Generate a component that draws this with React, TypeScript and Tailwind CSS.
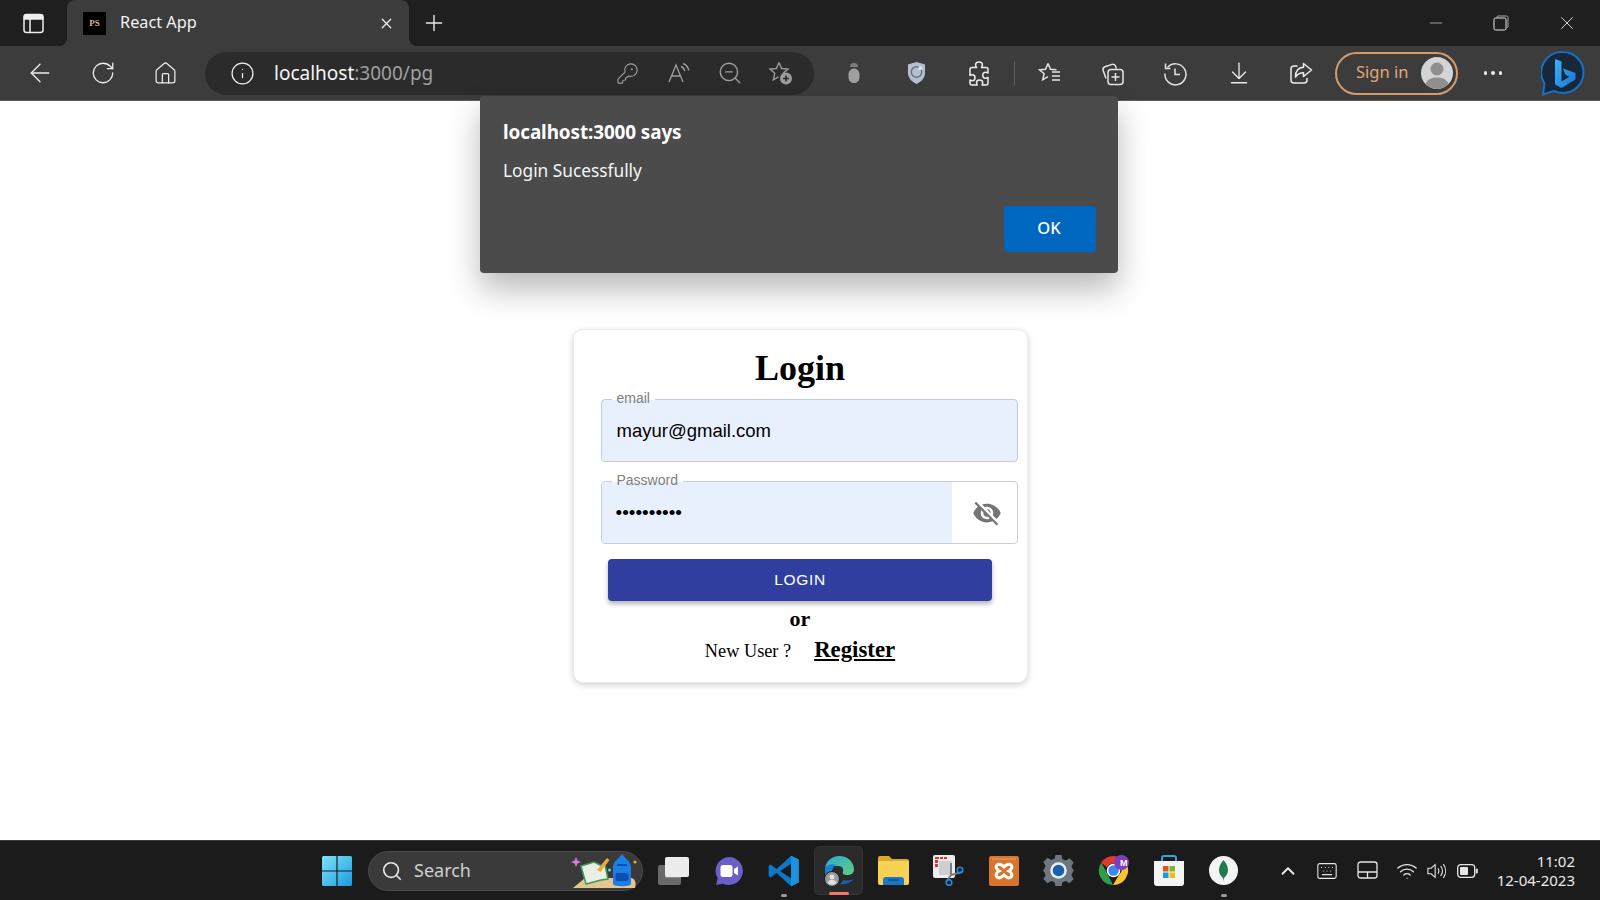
import React from "react";
import {
  ArrowLeft, RotateCw, House, Info, KeyRound, ZoomOut, ArrowDownToLine, Plus, X, Minus,
  Search, ChevronUp, Keyboard, Wifi,
} from "lucide-react";

const ui = { fontFamily: '"Noto Sans", "Open Sans", sans-serif' };
const serif = { fontFamily: '"Liberation Serif", serif' };
const arial = { fontFamily: '"Liberation Sans", Arial, sans-serif' };

function Cell({ w, children }: { w: string; children: React.ReactNode }) {
  return <div className={`${w} h-full flex items-center justify-center shrink-0`}>{children}</div>;
}

function SidebarIcon() {
  return (
    <svg width="21" height="21" viewBox="0 0 21 21" fill="none" stroke="#eee" strokeWidth="1.5">
      <rect x="1" y="1.5" width="19" height="18" rx="2.5" />
      <path d="M1.5 3.5 Q1.5 2 3 2H18q1.5 0 1.5 1.5V6H1.5z" fill="#eee" />
      <path d="M7 6v13" />
    </svg>
  );
}

function Favicon() {
  return (
    <div className="w-[23px] h-[23px] bg-black flex items-center justify-center text-[9px] font-bold text-[#d9b98a] leading-none" style={serif}>
      PS
    </div>
  );
}

function ReadAloud() {
  return (
    <svg width="24" height="24" viewBox="0 0 24 24" fill="none" stroke="#9c9c9c" strokeWidth="1.4">
      <path d="M2 21 9 4l7 17M4.6 15h8.8" />
      <path d="M14 5.5c2 .8 3.3 2.4 3.7 4.6M16 2.5c3.2 1.2 5.2 3.7 5.6 7" />
    </svg>
  );
}

function FavAdd() {
  return (
    <svg width="26" height="26" viewBox="0 0 26 26" fill="none" stroke="#9c9c9c" strokeWidth="1.4">
      <path d="M11 2.5l2.6 6 6.4.6-4.8 4.2 1.4 6.3" />
      <path d="M11 2.5 8.4 8.5 2 9.1l4.8 4.2-1.5 6.500 5.200-3" />
      <circle cx="18" cy="18.5" r="6" fill="#9c9c9c" stroke="none" />
      <path d="M18 15.5v6M15 18.5h6" stroke="#2b2b2b" strokeWidth="1.6" />
    </svg>
  );
}

function Figure() {
  return (
    <svg width="14" height="22" viewBox="0 0 14 22">
      <path d="M3 5a4 4 0 0 1 8 0z" fill="#7d7d7d" />
      <path d="M1.5 12c0-3 2.5-5.5 5.5-5.5S12.500 9 12.500 12v3.500a5.500 5.500 0 0 1-11 0z" fill="#a0a0a0" />
    </svg>
  );
}

function Shield() {
  return (
    <svg width="19" height="24" viewBox="0 0 20 25">
      <path d="M10 1 19 3.500V12c0 5.500-3.500 9.500-9 12C4.500 21.500 1 17.500 1 12V3.500z" fill="#b6bfd0" />
      <circle cx="10" cy="11.500" r="5.500" fill="none" stroke="#6a7484" strokeWidth="1.600" />
      <circle cx="14" cy="7.500" r="2" fill="#dfe4ec" />
    </svg>
  );
}

function PuzzleIcon() {
  return (
    <svg width="23" height="25" viewBox="0 0 23 25" fill="none" stroke="#eeeeee" strokeWidth="1.500" strokeLinejoin="round">
      <path d="M3 6.500h4.500c-.6-1-.9-1.700-.9-2.500 0-1.700 1.500-3 3.400-3s3.400 1.300 3.400 3c0 .8-.3 1.500-.9 2.500h4.500q2 0 2 2v3.500c-1-.6-1.800-.8-2.500-.8-1.500 0-2.800 1.300-2.800 3s1.300 3 2.800 3c.7 0 1.500-.2 2.500-.8V22q0 2-2 2h-4c.5-1 .7-1.600.7-2.300 0-1.500-1.400-2.700-3.100-2.700s-3.100 1.200-3.100 2.700c0 .7.200 1.300.7 2.300H3q-2 0-2-2v-3c1 .5 1.500.7 2.200.7 1.600 0 2.800-1.300 2.800-3s-1.200-3-2.800-3c-.7 0-1.200.2-2.200.7V8.500q0-2 2-2z" />
    </svg>
  );
}

function FavList() {
  return (
    <svg width="24" height="24" viewBox="0 0 24 24" fill="none" stroke="#e4e4e4" strokeWidth="1.5">
      <path d="M10 2.500l2.500 5.800 6 .5M10 2.500 7.500 8.300 1.500 8.800l4.600 4-1.400 6 5.300-3.100" />
      <path d="M14 11h8M14 15h8M14 19h8" />
    </svg>
  );
}

function Collections() {
  return (
    <svg width="25" height="25" viewBox="0 0 25 25" fill="none" stroke="#e4e4e4" strokeWidth="1.5">
      <path d="M6 17.500 3.200 9.500c-.7-2 .2-3.200 1.800-3.800l7-2.300c1.600-.5 3 .1 3.600 1.800l.7 2.300" />
      <rect x="8" y="8.500" width="15" height="15" rx="3" />
      <path d="M15.500 12v8M11.500 16h8" />
    </svg>
  );
}

function History() {
  return (
    <svg width="25" height="25" viewBox="0 0 25 25" fill="none" stroke="#e4e4e4" strokeWidth="1.5">
      <path d="M4.500 6.500A10.500 10.500 0 1 1 2 12.500" />
      <path d="M2.500 2.500v5h5" />
      <path d="M12 7.500V13.500h5" />
    </svg>
  );
}

function ShareBox() {
  return (
    <svg width="24" height="24" viewBox="0 0 24 24" fill="none" stroke="#ececec" strokeWidth="1.500" strokeLinejoin="round">
      <path d="M8.500 5H5q-3 0-3 3v11q0 3 3 3h10q3 0 3-3v-2" />
      <path d="M14.500 2.500 22.500 9l-8 6.500v-3.800c-3.500 0-6 1-8 4.300 0-6 3-9.500 8-9.700z" />
    </svg>
  );
}

function Avatar() {
  return (
    <svg width="32" height="32" viewBox="0 0 32 32">
      <circle cx="16" cy="16" r="16" fill="#d4d4d4" />
      <circle cx="16" cy="12" r="6.500" fill="#8f8f8f" />
      <path d="M4.500 27c2-5 6-6.500 11.500-6.500S25.500 22 27.500 27A16 16 0 0 1 4.500 27z" fill="#8f8f8f" />
    </svg>
  );
}

function Bing() {
  return (
    <svg width="44" height="46" viewBox="0 0 44 46">
      <defs>
        <linearGradient id="bingB" x1="0" y1="0" x2="1" y2="1">
          <stop offset="0" stopColor="#38b6f5" />
          <stop offset="1" stopColor="#1f6fd8" />
        </linearGradient>
      </defs>
      <path d="M22 2a20.500 20.500 0 0 1 0 41c-4 0-7-1-9.500-2L2 44.500l1.500-11A20.500 20.500 0 0 1 22 2z" fill="#17283b" stroke="#1a6fc0" strokeWidth="2" />
      <path d="M14 9l6.500 2.500v20l8-4.800-4-1.900-2.500-6.200 12.500 4.500v6.500L20.500 38 14 34.500z" fill="url(#bingB)" />
    </svg>
  );
}

function WinLogo() {
  return (
    <svg width="30" height="30" viewBox="0 0 30 30">
      <defs>
        <linearGradient id="winG" x1="0" y1="0" x2="1" y2="1">
          <stop offset="0" stopColor="#7fe3fa" />
          <stop offset="1" stopColor="#1a9be0" />
        </linearGradient>
      </defs>
      <path d="M0 1.500Q0 0 1.500 0H14.400V14.400H0zM15.600 0H28.500Q30 0 30 1.500V14.400H15.600zM0 15.600H14.400V30H1.500Q0 30 0 28.500zM15.600 15.600H30V28.500Q30 30 28.500 30H15.600z" fill="url(#winG)" />
    </svg>
  );
}

function SearchArt() {
  return (
    <svg width="68" height="36" viewBox="0 0 68 36">
      <path d="M3 35 15 25h46c3 0 6 4 4 10z" fill="#e6c690" />
      <path d="M11 13 24 9l8 4 3-1 3 14-7 1-15 4z" fill="#e9efe2" stroke="#3a9a5a" strokeWidth="1.500" />
      <path d="M27 17 37 5l2.500 2-9 12z" fill="#f0a63a" />
      <path d="M43 31V14c0-5 5-8 9-13 4 5 9 8 9 13v17c0 3-18 3-18 0z" fill="#1c7fe3" />
      <path d="M47 12h10" stroke="#0d4fb0" strokeWidth="2" />
      <rect x="45.500" y="20" width="13" height="8" rx="2" fill="#0d4fb0" />
      <path d="M6 4l1.500 3.500L11 9l-3.500 1.500L6 14l-1.500-3.500L1 9l3.500-1.500z" fill="#d77be0" />
      <circle cx="39.500" cy="17" r="1.500" fill="#66dcd6" />
      <circle cx="65" cy="9" r="1.500" fill="#f4a93a" />
    </svg>
  );
}

function TaskView() {
  return (
    <svg width="32" height="28" viewBox="0 0 32 28">
      <rect x="0" y="8" width="23" height="20" rx="2" fill="#6a6a6a" />
      <rect x="7" y="8" width="16" height="13" fill="#8c8c8c" />
      <rect x="7" y="0" width="24" height="20" rx="2" fill="#ececec" />
    </svg>
  );
}

function Teams() {
  return (
    <svg width="30" height="30" viewBox="0 0 30 30">
      <path d="M15 1a14 14 0 1 1-6 26.700L2 29l1.700-6.600A14 14 0 0 1 15 1z" fill="#6b5fc7" />
      <rect x="6.500" y="9" width="12" height="12" rx="2.500" fill="#fff" />
      <path d="M20 13l4-2.500v9L20 17z" fill="#fff" />
    </svg>
  );
}

function VSCode() {
  return (
    <svg width="32" height="32" viewBox="0 0 100 100">
      <path d="M72 98 96 86V14L72 2 27 44 8 30 2 34v32l6 4 19-14z" fill="#0a7ac7" />
      <path d="M72 27 38 50l34 23z" fill="#1b1b1b" />
      <path d="M72 2 96 14v72L72 98z" fill="#1a94e0" />
    </svg>
  );
}

function Edge() {
  return (
    <svg width="32" height="32" viewBox="0 0 32 32">
      <defs>
        <linearGradient id="edgeA" x1="0" y1="0" x2="1" y2="1">
          <stop offset="0" stopColor="#2fa8dc" />
          <stop offset="1" stopColor="#5fd07a" />
        </linearGradient>
      </defs>
      <path d="M2 13C3 6 9 1 16 1c9 0 15 6 15 14 0 3-3 5-7 5-3 0-5-1-4-3 1-3-1-6-5-6-6 0-11 .5-13 2z" fill="url(#edgeA)" />
      <path d="M2 13c2-3 7-5 11-3-3 2-4.500 5-4.500 9s3 8 8 10C8 30 1 23 2 13z" fill="#1a7fd0" />
      <path d="M17 29c5 1 11-1 13.500-5-2 1-6 2-10 1z" fill="#1a5cb0" />
      <circle cx="9" cy="24" r="7.500" fill="#9a9a9a" stroke="#1a1a1a" />
      <circle cx="9" cy="22" r="2.500" fill="#e2e2e2" />
      <path d="M4.500 28c1-2.500 2.500-3 4.500-3s3.500.5 4.500 3a7 7 0 0 1-9 0z" fill="#e2e2e2" />
    </svg>
  );
}

function Folder() {
  return (
    <svg width="31" height="29" viewBox="0 0 31 29">
      <path d="M0 2q0-2 2-2h9l3 3h15q2 0 2 2v4H0z" fill="#e0a82a" />
      <path d="M0 5h31v22q0 2-2 2H2q-2 0-2-2z" fill="#f8d254" />
      <path d="M5 29v-5q0-3 3-3h15q3 0 3 3v5z" fill="#1b78c8" />
      <path d="M10 24h11" stroke="#0c4f8e" strokeWidth="1.500" />
    </svg>
  );
}

function Snip() {
  return (
    <svg width="31" height="31" viewBox="0 0 31 31">
      <rect x="0" y="0" width="22" height="23" rx="2" fill="#ededed" />
      <path d="M2 2h4v2H2zM7 2h3v2H7zM11 2h3v2h-3zM2 5h3v3H2zM2 9h3v3H2z" fill="#d9362e" />
      <rect x="6" y="6" width="13" height="14" fill="#cfcfcf" />
      <path d="M18 8v12l-5 7M18 20l11-3" stroke="#7c7c7c" strokeWidth="2" fill="none" />
      <circle cx="27" cy="15" r="2.800" fill="none" stroke="#1c8be0" strokeWidth="1.600" />
      <circle cx="16" cy="27.500" r="2.800" fill="none" stroke="#1c8be0" strokeWidth="1.600" />
    </svg>
  );
}

function Xampp() {
  return (
    <svg width="30" height="30" viewBox="0 0 30 30">
      <rect width="30" height="30" rx="2" fill="#d9742c" />
      <path d="M3 3h24" stroke="#e8a270" strokeWidth="1" />
      <path d="M8 9c2-2 5 0 7 2 2-2 5-4 7-2s0 5-2 6c2 1 4 4 2 6s-5 0-7-2c-2 2-5 4-7 2s0-5 2-6C8 14 6 11 8 9z" fill="none" stroke="#fff" strokeWidth="3" />
    </svg>
  );
}

function Gear() {
  return (
    <svg width="31" height="31" viewBox="0 0 31 31">
      <path d="M12.500 0h6l1 4.200 3.300 1.400 3.700-2.300 4.200 4.200-2.300 3.700L29.800 14 31 15.500l-1.200 1.500-1.400 3.300 2.300 3.700-4.200 4.200-3.700-2.300-3.300 1.400-1 4.200h-6l-1-4.200-3.300-1.400-3.700 2.300-4.200-4.200 2.300-3.700L1.200 17 0 15.500 1.200 14l1.400-3.300L.3 7l4.200-4.200 3.700 2.300 3.300-1.400z" fill="#6e7780" />
      <circle cx="15.500" cy="15.500" r="8.300" fill="#e8edf2" />
      <circle cx="15.500" cy="15.500" r="5.800" fill="#1a5fb0" />
    </svg>
  );
}

function Chrome() {
  return (
    <svg width="32" height="32" viewBox="0 0 32 32">
      <path d="M15.500 1a14.500 14.500 0 0 1 12.600 7.300L15.500 8.500A7 7 0 0 0 9 12.500L3.300 7.500A14.500 14.500 0 0 1 15.500 1z" fill="#e0392f" />
      <path d="M3.300 7.500 9.500 19 15 30A14.500 14.500 0 0 1 3.300 7.500z" fill="#2f9e48" />
      <path d="M28.100 8.300A14.500 14.500 0 0 1 15 30L21.500 19a7 7 0 0 0 0-10.700z" fill="#f7c52f" />
      <circle cx="15.500" cy="15.500" r="6.800" fill="#fff" />
      <circle cx="15.500" cy="15.500" r="5.200" fill="#3b87ec" />
      <circle cx="23.500" cy="7.500" r="7.500" fill="#7d3fc0" />
    </svg>
  );
}

function Store() {
  return (
    <svg width="30" height="31" viewBox="0 0 30 31">
      <path d="M8 6V3q0-2 2-2h10q2 0 2 2v3" fill="none" stroke="#2aa7dc" strokeWidth="2" />
      <path d="M0 6h30v22q0 3-3 3H3q-3 0-3-3z" fill="#f4f4f4" />
      <rect x="9" y="11" width="5.500" height="5.500" fill="#e8502a" />
      <rect x="15.500" y="11" width="5.500" height="5.500" fill="#7db52c" />
      <rect x="9" y="17.500" width="5.500" height="5.500" fill="#14a0e0" />
      <rect x="15.500" y="17.500" width="5.500" height="5.500" fill="#f7b91a" />
    </svg>
  );
}

function Mongo() {
  return (
    <svg width="29" height="29" viewBox="0 0 29 29">
      <circle cx="14.500" cy="14.500" r="14.500" fill="#f4f4f4" />
      <path d="M14.500 4c2.500 3 4.500 6 4.500 10 0 4-2.500 6.500-4 8l-.5 3-.5-3c-1.500-1.500-4-4-4-8 0-4 2-7 4.500-10z" fill="#1f7a4d" />
    </svg>
  );
}

function Touchpad() {
  return (
    <svg width="21" height="19" viewBox="0 0 21 19" fill="none" stroke="#e6e6e6" strokeWidth="1.300">
      <rect x="1" y="1" width="19" height="16" rx="2.500" />
      <path d="M1 11h19M10.500 11v6" />
    </svg>
  );
}

function Speaker() {
  return (
    <svg width="22" height="20" viewBox="0 0 22 20" fill="none" stroke="#e6e6e6" strokeWidth="1.200">
      <path d="M1 7v6h3.500L9 17V3L4.500 7z" />
      <path d="M12 7c1.200 1.800 1.200 4.200 0 6M15 4.500c2.400 3.300 2.400 7.700 0 11M18 2.500c3.200 4.500 3.200 10.500 0 15" />
    </svg>
  );
}

function Battery() {
  return (
    <svg width="21" height="14" viewBox="0 0 21 14">
      <rect x=".7" y=".7" width="17" height="12.600" rx="3" fill="none" stroke="#e6e6e6" strokeWidth="1.300" />
      <rect x="3" y="3" width="8" height="8" rx="1" fill="#e6e6e6" />
      <rect x="18.800" y="4.500" width="2" height="5" rx="1" fill="#e6e6e6" />
    </svg>
  );
}

function VisibilityOff() {
  return (
    <svg width="30" height="30" viewBox="0 0 24 24" fill="#757575">
      <path d="M12 7c2.760 0 5 2.240 5 5 0 .65-.13 1.260-.36 1.830l2.920 2.920c1.510-1.260 2.700-2.890 3.430-4.750-1.730-4.390-6-7.500-11-7.500-1.400 0-2.740.25-3.980.7l2.160 2.160C10.740 7.130 11.350 7 12 7zM2 4.270l2.280 2.280.46.46C3.080 8.300 1.780 10.020 1 12c1.730 4.390 6 7.500 11 7.500 1.550 0 3.030-.3 4.380-.84l.42.42L19.730 22 21 20.730 3.270 3 2 4.270zM7.530 9.800l1.550 1.550c-.05.21-.08.43-.08.65 0 1.660 1.340 3 3 3 .22 0 .44-.03.65-.08l1.550 1.550c-.67.33-1.410.53-2.200.53-2.760 0-5-2.240-5-5 0-.79.2-1.530.53-2.200zm4.310-.78l3.150 3.150.02-.16c0-1.660-1.340-3-3-3l-.17.01z" />
    </svg>
  );
}

function Dot() {
  return <span className="absolute bottom-[3px] left-1/2 -translate-x-1/2 w-[6px] h-[3px] rounded-full bg-[#9a9a9a]" />;
}

function TaskItem({ children, dot }: { children: React.ReactNode; dot?: boolean }) {
  return (
    <div className="relative w-[55px] h-full flex items-center justify-center shrink-0">
      {children}
      {dot && <Dot />}
    </div>
  );
}

export default function App() {
  return (
    <div className="w-[1600px] h-[900px] flex flex-col overflow-hidden bg-white" style={ui}>
      {/* tab strip */}
      <div className="h-[46px] shrink-0 flex bg-[#3c3c3c]">
        <div className="w-[67px] shrink-0 bg-[#1f1f1f] rounded-br-[8px] flex items-center justify-center">
          <SidebarIcon />
        </div>
        <div className="w-[342px] shrink-0 bg-[#1f1f1f]">
          <div className="h-full bg-[#3c3c3c] rounded-t-[8px] flex items-center pl-[16px] pr-[14px] text-[#f2f2f2]">
            <Favicon />
            <span className="ml-[14px] text-[16.300px] flex-1 -mt-[2px]">React App</span>
            <X size={17} strokeWidth={1.8} color="#f0f0f0" />
          </div>
        </div>
        <div className="flex-1 bg-[#1f1f1f] rounded-bl-[8px] flex items-center">
          <div className="ml-[12px]">
            <Plus size={26} strokeWidth={1.3} color="#e8e8e8" />
          </div>
          <div className="ml-auto flex items-center h-full">
            <Cell w="w-[65px]"><Minus size={20} strokeWidth={1} color="#b5b5b5" /></Cell>
            <Cell w="w-[65px]">
              <svg width="16" height="16" viewBox="0 0 16 16" fill="none" stroke="#e8e8e8" strokeWidth="1">
                <rect x="1" y="3" width="12" height="12" rx="1.500" />
                <path d="M3.500 3 4.500 1H13.500q1.500 0 1.500 1.500V12L13 13" stroke="#aaa" />
              </svg>
            </Cell>
            <Cell w="w-[67px]"><X size={22} strokeWidth={1} color="#e8e8e8" /></Cell>
          </div>
        </div>
      </div>

      {/* toolbar */}
      <div className="h-[55px] shrink-0 bg-[#3c3c3c] border-b border-[#5a5a5a] flex items-center pl-[8px] relative">
        <Cell w="w-[64px]"><ArrowLeft size={30} strokeWidth={1.1} color="#ececec" /></Cell>
        <Cell w="w-[62px]"><RotateCw size={26} strokeWidth={1.2} color="#ececec" /></Cell>
        <Cell w="w-[63px]"><House size={25} strokeWidth={1.2} color="#ececec" /></Cell>
        <div className="ml-[8px] w-[609px] h-[43px] rounded-full bg-[#2b2b2b] flex items-center pl-[21px] pr-[8px] shrink-0">
          <Cell w="w-[32px]"><Info size={25} strokeWidth={1.2} color="#f0f0f0" /></Cell>
          <span className="ml-[16px] text-[19px] flex-1 text-[#f5f5f5]">
            localhost<span className="text-[#a0a0a0]">:3000/pg</span>
          </span>
          <Cell w="w-[51px]"><KeyRound size={23} strokeWidth={1.2} color="#9c9c9c" /></Cell>
          <Cell w="w-[51px]"><ReadAloud /></Cell>
          <Cell w="w-[51px]"><ZoomOut size={26} strokeWidth={1.3} color="#9c9c9c" /></Cell>
          <Cell w="w-[51px]"><FavAdd /></Cell>
        </div>
        <div className="ml-[8px] flex h-full items-center">
          <Cell w="w-[63px]"><Figure /></Cell>
          <Cell w="w-[63px]"><Shield /></Cell>
          <Cell w="w-[65px]"><PuzzleIcon /></Cell>
        </div>
        <div className="w-px h-[24px] bg-[#5f5f5f] ml-[1px] mr-[3px]" />
        <Cell w="w-[63px]"><FavList /></Cell>
        <Cell w="w-[63px]"><Collections /></Cell>
        <Cell w="w-[63px]"><History /></Cell>
        <Cell w="w-[63px]"><ArrowDownToLine size={26} strokeWidth={1.2} color="#ececec" /></Cell>
        <Cell w="w-[62px]"><ShareBox /></Cell>
        <div className="ml-[3px] w-[123px] h-[43px] shrink-0 rounded-full border-2 border-[#d59a66] flex items-center pl-[19px] pr-[3px] text-[#e3a873] text-[16.500px]">
          <span className="flex-1 -mt-[1px]">Sign in</span>
          <Avatar />
        </div>
        <div className="w-[70px] flex items-center justify-center gap-[4px] shrink-0">
          <span className="w-[3.500px] h-[3.500px] rounded-full bg-[#eee]" />
          <span className="w-[3.500px] h-[3.500px] rounded-full bg-[#eee]" />
          <span className="w-[3.500px] h-[3.500px] rounded-full bg-[#eee]" />
        </div>
        <div className="ml-[13px]"><Bing /></div>
      </div>

      {/* page */}
      <main className="relative flex-1 bg-white flex justify-center pt-[228px]">
        {/* alert dialog */}
        <div className="absolute left-[480px] top-[-5px] w-[638px] h-[177px] bg-[#4b4b4b] rounded-[4px] shadow-[0_16px_32px_rgba(0,0,0,0.28)] flex flex-col text-white z-10 px-[23px]">
          <div className="mt-[22px] text-[18.900px] font-bold leading-[28px] -tracking-[0.1px]">localhost:3000 says</div>
          <div className="mt-[11px] text-[17.300px] leading-[28px] text-[#f5f5f5]">Login Sucessfully</div>
          <button className="self-end mt-[21px] mr-[-1px] w-[92px] h-[46px] rounded-[4px] bg-[#0067c0] text-[16.500px] font-medium text-white pb-[2px] pr-[2px]">OK</button>
        </div>

        {/* login card */}
        <div className="w-[455px] h-[354px] bg-white rounded-[10px] border border-[#ececec] shadow-[0_2px_6px_rgba(0,0,0,0.18)] flex flex-col items-center">
          <h1 className="mt-[16px] text-[36px] leading-[44px] font-bold text-black" style={serif}>Login</h1>

          <div className="relative mt-[9px] ml-[27px] self-start w-[417px] h-[63px]" style={arial}>
            <input
              readOnly
              value="mayur@gmail.com"
              className="w-full h-full bg-[#e8f0fe] border border-[#c3cbd8] rounded-[4px] pl-[15px] text-[18.500px] text-black outline-none"
            />
            <span className="absolute left-[11px] top-[-9px] px-[5px] bg-[linear-gradient(white_0_57%,transparent_57%)] text-[14px] leading-[17px] text-[#808080]">email</span>
          </div>

          <div className="relative mt-[19px] ml-[27px] self-start w-[417px] h-[63px] flex border border-[#c9ced6] rounded-[4px]" style={arial}>
            <input
              readOnly
              type="password"
              value="1234567890"
              className="w-[350px] h-full bg-[#e8f0fe] rounded-l-[4px] pl-[14px] pt-[1px] text-[19px] text-black outline-none"
            />
            <div className="flex-1 flex items-center justify-center pl-[6px] pt-[1px]"><VisibilityOff /></div>
            <span className="absolute left-[10px] top-[-10px] px-[5px] bg-[linear-gradient(white_0_57%,transparent_57%)] text-[14px] leading-[17px] text-[#808080]">Password</span>
          </div>

          <button
            className="mt-[15px] w-[384px] h-[42px] shrink-0 rounded-[4px] bg-[#303f9f] text-white text-[15.500px] font-medium tracking-[0.7px] shadow-[0_3px_5px_rgba(0,0,0,0.3)]"
            style={arial}
          >
            LOGIN
          </button>

          <div className="mt-[3px] text-[22px] leading-[30px] font-bold text-black" style={serif}>or</div>
          <div className="-mt-[1px] flex items-baseline text-black" style={serif}>
            <span className="text-[18.300px]">New User ?</span>
            <a className="ml-[23px] text-[22.800px] font-bold underline">Register</a>
          </div>
        </div>
      </main>

      {/* taskbar */}
      <div className="h-[60px] shrink-0 bg-[#1b1b1b] border-t border-[#3b3b3b] flex items-center text-[#e8e8e8]">
        <div className="ml-[310px] w-[54px] h-full flex items-center justify-center shrink-0"><WinLogo /></div>
        <div className="ml-[4px] w-[275px] h-[40px] rounded-full bg-[#3a3a3a] border border-[#4a4a4a] flex items-center pl-[12px] pr-[4px] shrink-0">
          <Search size={22} strokeWidth={1.8} color="#e8e8e8" />
          <span className="ml-[11px] text-[18px] text-[#cfcfcf] flex-1">Search</span>
          <SearchArt />
        </div>
        <div className="ml-[3px] flex h-full">
          <TaskItem><TaskView /></TaskItem>
          <TaskItem><Teams /></TaskItem>
          <TaskItem dot><VSCode /></TaskItem>
          <div className="relative w-[55px] h-full flex items-center justify-center shrink-0">
            <div className="absolute inset-x-[3px] top-[5px] bottom-[5px] rounded-[5px] bg-[#2a2a2a] border border-[#333]" />
            <div className="relative"><Edge /></div>
            <span className="absolute bottom-[5px] left-1/2 -translate-x-1/2 w-[20px] h-[3px] rounded-full bg-[#f0776a]" />
          </div>
          <TaskItem><Folder /></TaskItem>
          <TaskItem><Snip /></TaskItem>
          <TaskItem><Xampp /></TaskItem>
          <TaskItem><Gear /></TaskItem>
          <TaskItem>
            <div className="relative">
              <Chrome />
              <span className="absolute right-[2px] top-[1px] text-[9px] font-bold text-white leading-[14px]" style={arial}>M</span>
            </div>
          </TaskItem>
          <TaskItem><Store /></TaskItem>
          <TaskItem dot><Mongo /></TaskItem>
        </div>
        <div className="ml-[18px] flex h-full items-center">
          <Cell w="w-[38px]"><ChevronUp size={22} strokeWidth={2} color="#eeeeee" /></Cell>
          <Cell w="w-[40px]"><Keyboard size={22} strokeWidth={1.2} color="#e6e6e6" /></Cell>
          <Cell w="w-[40px]"><Touchpad /></Cell>
          <Cell w="w-[40px]"><Wifi size={22} strokeWidth={1.4} color="#e6e6e6" /></Cell>
          <Cell w="w-[20px]"><Speaker /></Cell>
          <Cell w="w-[40px]"><Battery /></Cell>
        </div>
        <div className="flex-1 pr-[25px] text-right text-[15px] leading-[19px] text-[#eaeaea]">
          <div>11:02</div>
          <div>12-04-2023</div>
        </div>
      </div>
    </div>
  );
}
